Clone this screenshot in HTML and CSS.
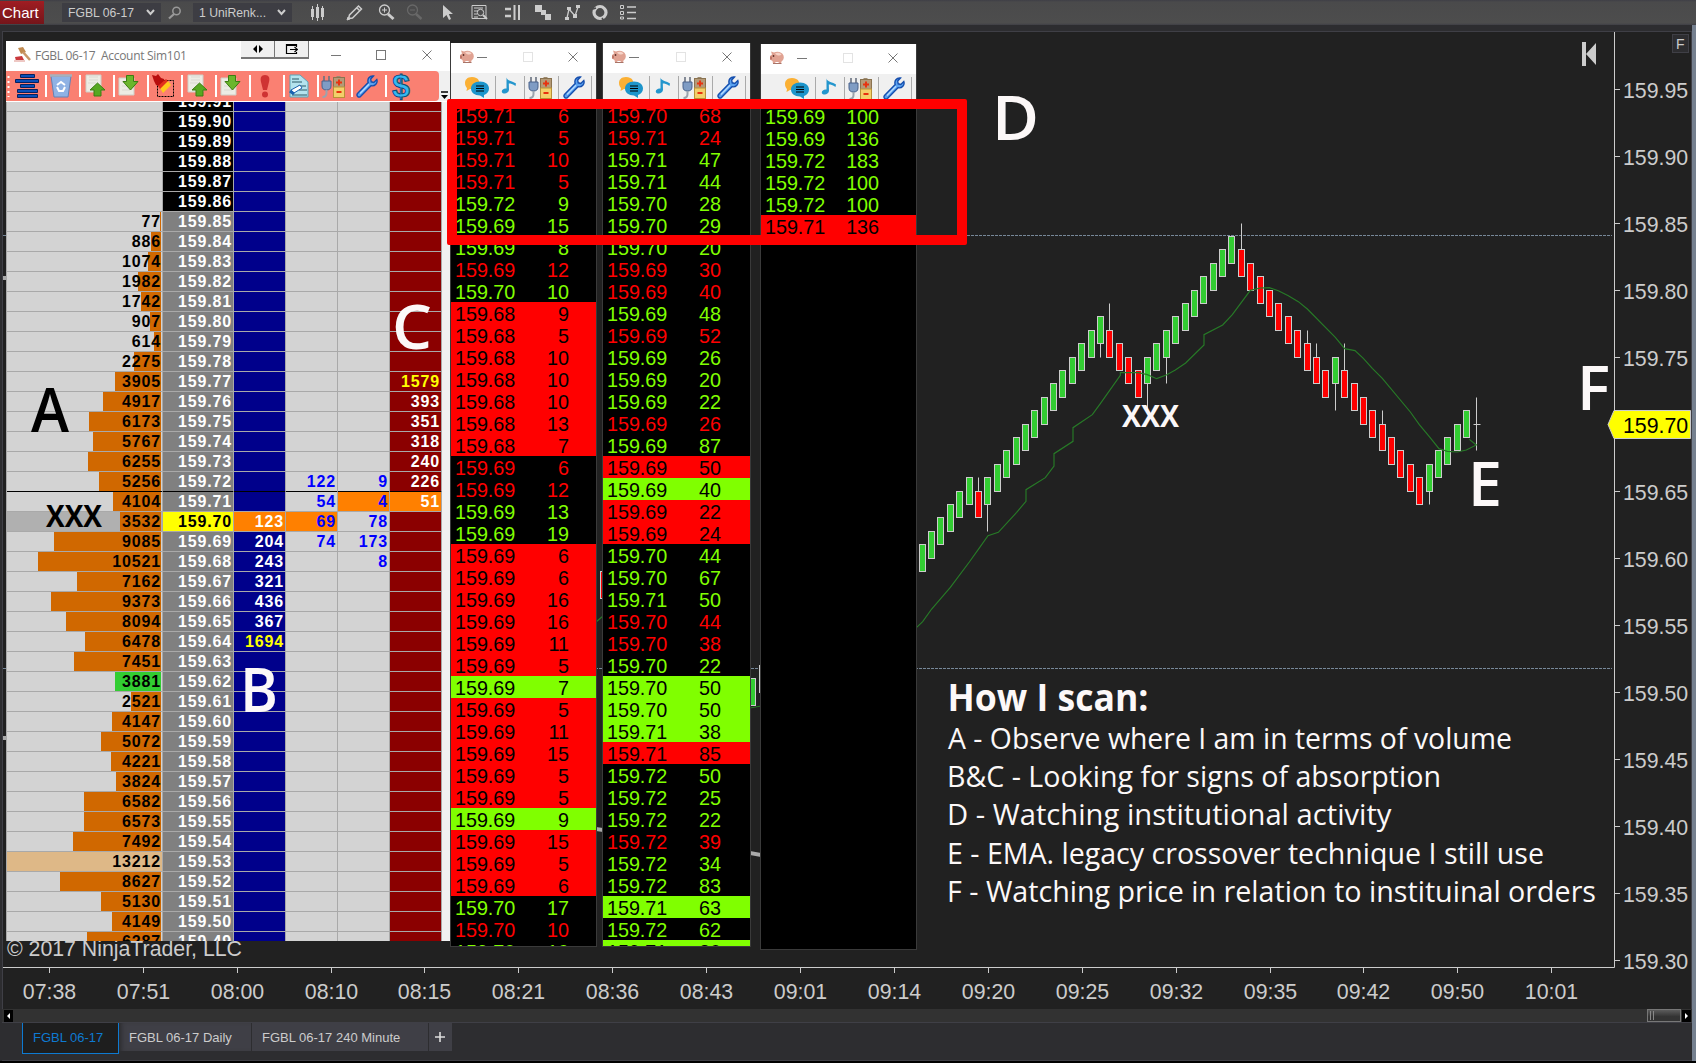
FILE: index.html
```html
<!DOCTYPE html>
<html lang="en">
<head>
  <meta charset="utf-8">
  <title>Chart - FGBL 06-17</title>
  <link rel="stylesheet" href="styles.css">
</head>
<body>
  <!-- shared icons -->
  <svg class="sprite" width="0" height="0">
    <symbol id="i-pig" viewBox="0 0 16 14">
      <path d="M3 4 L2 1 L5 2 C8 0.5 13 1 14.5 5 C15.5 8 14 10 12.5 11 L12 13 H10 L9.5 11.5 H6.500 L6 13 H4 L3.500 10.500 L1 9 V5.500 Z" fill="#e0a292"/>
      <path d="M6 3 C8 1.800 11 2 12.500 4 C11 5.500 8 5.500 6 3 Z" fill="#f6d3c8"/>
      <path d="M4 13 H12.500" stroke="#a87468" stroke-width="1"/>
      <circle cx="4.500" cy="5.500" r=".9" fill="#5c2f28"/><path d="M1 6 h2 v3 h-2 z" fill="#bf7668"/>
    </symbol>
    <symbol id="i-chat" viewBox="0 0 24 22">
      <path d="M7 1 C2 1 0 4 0 7 C0 9.500 1 11 2 12 L1.500 15 L5 13 H9 C14 12 15 8 14 5 C13 2 10 1 7 1 Z" fill="#fbb034"/>
      <path d="M15 5.500 C9.500 5.500 6 8.500 6 12.500 C6 16.500 9.500 19.500 15 19.500 L19 22 V19 C22 18 24 15.500 24 12.500 C24 8.500 20.500 5.500 15 5.500 Z" fill="#1d95cb"/>
      <path d="M11 10h8M11 12.500h8M11 15h8" stroke="#000" stroke-width="1.200"/>
    </symbol>
    <symbol id="i-note" viewBox="0 0 15 17">
      <path d="M5.500 0.500 C6 4 12 4 15 6.500 L14.500 9 C12 7 9.500 6.500 7.800 6.500 L8 13 C7.500 16 4 17.500 1.500 16 C-.5 14 2 11 5.500 11.500 Z" fill="#2496cd"/>
    </symbol>
    <symbol id="i-plug" viewBox="0 0 24 23">
      <path d="M3 1v5M8 1v5" stroke="#6a7280" stroke-width="1.600"/>
      <path d="M1 6h9v5c0 3-2 4-4.500 4S1 14 1 11z" fill="#7f9cc4" stroke="#4a628c"/>
      <path d="M5.500 15v3c0 3-2 4-4 4" fill="none" stroke="#9aa3ad" stroke-width="2"/>
      <path d="M15.500 1h4v2h-4z" fill="#9d8a70"/>
      <rect x="12.500" y="2.500" width="11" height="10" fill="#b49a78" stroke="#8a7350"/>
      <rect x="12.500" y="12" width="11" height="10.500" fill="#f3d06a" stroke="#b89237"/>
      <path d="M18 4.500v6M15 7.500h6M15.500 17h5" stroke="#e8320f" stroke-width="1.900"/>
    </symbol>
    <symbol id="i-wrench" viewBox="0 0 22 23">
      <path d="M17.500 1 C13.500 0.500 11 4 12.200 7.500 L1.500 18.500 C0 20.500 2.500 23.500 4.500 21.500 L15 10.700 C19 11.500 22 8 20.800 4.500 L17.800 7.400 L15.200 6.800 L14.700 4 Z" fill="#5aa2f0" stroke="#164fae" stroke-width="1.400"/>
      <path d="M4 18.500 L13 9.200" stroke="#b8dcff" stroke-width="1.300"/>
    </symbol>
    <symbol id="i-up" viewBox="0 0 24 24">
      <path d="M3 1h15v17H3z" fill="#ececE4" stroke="#cfcfc6"/><path d="M6 3h9M6 6h9M5 9h8" stroke="#d9d9d0"/>
      <path d="M14.500 9 L22 16 H18 V22 H11 V16 H7 Z" fill="#57a821" stroke="#3c7d12"/>
    </symbol>
    <symbol id="i-down" viewBox="0 0 24 24">
      <path d="M2 4h15v17H2z" fill="#ecece4" stroke="#cfcfc6"/><path d="M5 8h8M5 12h8M5 16h8" stroke="#d9d9d0"/>
      <path d="M9.500 1.500 H16.500 V7.500 H21 L13.500 16 L6 7.500 H9.500 Z" fill="#6bb62c" stroke="#3c7d12"/>
    </symbol>
    <symbol id="i-x" viewBox="0 0 10 10"><path d="M0.500 0.500 L9.500 9.500 M9.500 0.500 L0.500 9.500" stroke="#777" fill="none"/></symbol>
  </svg>

  <div class="menubar">
    <span class="badge">Chart</span>
    <div class="combo combo-instrument"><span>FGBL 06-17</span><svg width="9" height="7"><path d="M1 1 L4.500 5 L8 1" fill="none" stroke="#ccc" stroke-width="2"/></svg></div>
    <svg class="search" width="14" height="14"><circle cx="8.500" cy="5" r="3.700" fill="none" stroke="#999" stroke-width="1.500"/><path d="M6 8 L1 12.500" stroke="#999" stroke-width="2.200"/></svg>
    <div class="combo combo-period"><span>1 UniRenk...</span><svg width="9" height="7"><path d="M1 1 L4.500 5 L8 1" fill="none" stroke="#ccc" stroke-width="2"/></svg></div>
    <svg class="tools" width="350" height="25" viewBox="300 0 350 25" fill="none" stroke="#ccc">
      <path d="M312.500 6v14M317.500 4v17M322.500 6v14" /><path d="M312.500 9v8M317.500 7v11M322.500 8v9" stroke-width="3"/>
      <path d="M348.500 18.500 L349.500 15 L358.500 6 L361.500 9 L352.500 18 Z M357 8 L360 11" stroke-width="1.500"/><path d="M347 20l1-3 2 2z" fill="#ccc"/>
      <circle cx="384.500" cy="10" r="5" stroke-width="1.300"/><path d="M382 10h5M384.500 7.500v5"/><path d="M388 14l5.500 5" stroke-width="3"/>
      <g stroke="#686868"><circle cx="412.500" cy="10" r="5" stroke-width="1.300"/><path d="M410 10h5"/><path d="M416 14l5.500 5" stroke-width="2.500"/></g>
      <path d="M443 5 V18 L446.500 15 L449 20 L451 19 L448.800 14 L453 14 Z" fill="#ccc" stroke="none"/>
      <path d="M472 5.500h14v13h-14zM474 8h9M474 11h4M474 14h3M474 17h4"/><circle cx="480.500" cy="12.500" r="3.200"/><path d="M483 15l4 4" stroke-width="2"/>
      <path d="M505 9h6M505 16h6" stroke-width="2.500"/><path d="M514.500 5v15M519 5v15" stroke-width="2"/>
      <g fill="#ccc" stroke="none"><path d="M535 5h7v7h-7zM541 10h5v5h-5zM545 14h6v6h-6z"/></g>
      <path d="M567 18 L569 9 L575 16 L578 7" stroke-width="1.300"/><g fill="#ccc" stroke="none"><path d="M565 17h4v3h-4zM567 7h4v3h-4zM573 14h4v4h-4zM576 5h4v3h-4z"/></g>
      <circle cx="600" cy="12.500" r="6" stroke-width="3.200"/><path d="M593 9l3-1M602 18l2 3M605 7l2-2" stroke="#4b4b4c" stroke-width="1.500"/>
      <path d="M620.500 5.500h3v3h-3zM620.500 11.500h3v3h-3zM620.500 17h3v2h-3z"/><path d="M627 7h9M627 12.500h9M627 18.500h9" stroke-width="1.500"/>
    </svg>
  </div>

  <div class="main">
    <div class="workspace">
      <!-- drawing units are page pixels -->
      <svg id="chart" width="1688" height="977" viewBox="3 32 1688 977">
        <g class="session">
          <path d="M3 235.500H1612M3 668.500H1612"/>
        </g>
        <g fill="#aaa"><path d="M3 276h4v4h-4zM3 736h4v4h-4zM596 827l7 1v4l-7-1zM750 851l11 2v4l-11-2z"/></g>
        <g stroke="#ccc"><path d="M596.500 558v28M759.500 665v28"/>
          <rect x="600.500" y="571.500" width="6" height="27" fill="#f00"/><rect x="749.500" y="678.500" width="6" height="27" fill="#32cd32"/></g>
        <path class="ema" d="M596 622l7-6M750 708l11-2"/>
        <g id="candles"></g>
        <g transform="translate(900 210) scale(.33333)">
          <polyline class="ema wide" points="50,1252 68,1235 95,1197 151,1132 208,1056 235,1018 264,977 295,967 350,907 378,874 378,839 436,803 462,768 462,731 519,694 519,653 577,614 601,581 661,496 661,488 715,488 742,494 770,506 799,495 826,480 857,459 912,405 912,374 968,345 997,314 1051,241 1081,234 1108,233 1135,242 1165,257 1195,275 1222,297 1306,382 1334,416 1365,422 1390,445 1417,475 1447,505 1531,606 1558,644 1588,680 1617,716 1642,724 1672,726 1699,720 1729,705 1708,688"/>
        </g>
        <g id="axes"><path class="axis" d="M1614.500 32V967.500H3"/></g>
        <path class="price-flag" d="M1608 424.500 L1614 410.500 H1690.500 V438.500 H1614 Z"/>
        <text class="axis-label now" x="1623" y="433">159.70</text>
        <path d="M1582 42h4v24h-4zM1586 54L1596 43V65z" fill="#ccc"/>
        <rect x="1672.500" y="34.500" width="16" height="18" fill="#2d2d30" stroke="#3f3f46"/>
        <text class="fix" x="1676" y="49">F</text>
        <text class="axis-label" x="7" y="956" textLength="235">© 2017 NinjaTrader, LLC</text>
      </svg>
    </div>
    <div class="scroll">
      <span class="arrow"><svg width="9" height="12"><path d="M6 3v6L3 6z" fill="#fff"/></svg></span>
      <span class="thumb"><svg width="8" height="10"><path d="M1.500 0v9M4.500 0v9" stroke="#888"/></svg></span>
      <span class="arrow"><svg width="9" height="12"><path d="M3 3v6L6 6z" fill="#fff"/></svg></span>
    </div>
    <div class="tabs">
      <span class="tab active">FGBL 06-17</span>
      <span class="tab daily">FGBL 06-17 Daily</span>
      <span class="tab minute">FGBL 06-17 240 Minute</span>
      <span class="tab plus"><svg width="10" height="10"><path d="M5 0v10M0 5h10" stroke="#ddd" stroke-width="1.600"/></svg></span>
    </div>
  </div>

  <div class="window dom">
    <div class="dom-title">
      <svg width="17" height="16" viewBox="0 0 17 16"><path d="M4 1l5-1 3 5-5 2z" fill="#c08a50"/><path d="M9 5l7 8" stroke="#c9986a" stroke-width="2.500"/><path d="M1 10l7-1 2 4-8 1z" fill="#c9393c"/><path d="M0 13h11v2H0z" fill="#eec8c4"/></svg>
      <span class="dom-name">FGBL 06-17&nbsp; Account Sim101</span>
      <span class="tbtn"><svg width="12" height="8"><path d="M5 0v8L1 4zM7 0v8l4-4z"/></svg></span>
      <span class="tbtn"><svg width="13" height="12"><path d="M11.500 4V1.500h-10v9h10V9M1 2.500h11M5 6.500h7M9.500 4l3 2.500-3 2.500" fill="none" stroke="#000" stroke-width="1.200"/></svg></span>
      <svg class="cap-min" width="10" height="10"><path d="M0 4.500h10" stroke="#777"/></svg>
      <svg class="cap-max" width="10" height="10"><rect x=".5" y=".5" width="9" height="9" fill="none" stroke="#777"/></svg>
      <svg class="cap-x" width="10" height="10"><use href="#i-x"/></svg>
    </div>
    <div class="dom-tools">
      <div class="salmon">
        <svg class="grip" width="5" height="22"><path d="M2.500 1v21" stroke="#fff" stroke-width="2" stroke-dasharray="2 3"/></svg>
        <span class="tool"><svg width="24" height="24"><g fill="#0a4fb8" stroke="#06205f"><path d="M5.500 .5h14v3h-14zM.5 5.500h23v3h-23zM5.500 10.500h14v3h-14zM2.500 15.500h20v3h-20zM2.500 20.500h20v3h-20z"/></g></svg></span>
        <span class="tool"><svg width="24" height="24"><path d="M2 2h20l-3 21H5z" fill="#8fb2e4" stroke="#6482b5"/><path d="M1 1.500h22" stroke="#a9b1bb" stroke-width="2.500"/><path d="M8 11l4-3 4 3M16 13l-2 4h-4l-2-4" fill="none" stroke="#fff" stroke-width="2"/></svg></span>
        <span class="tool"><svg width="24" height="24"><use href="#i-up"/></svg></span>
        <span class="tool"><svg width="24" height="24"><use href="#i-down"/></svg></span>
        <span class="tool"><svg width="24" height="24"><rect x="6.500" y="6.500" width="16" height="16" fill="none" stroke="#000" stroke-dasharray="2 1"/><path d="M1 1l4 1 2-2 3 4 3 1 1 4-4 4-5-2-2-4z" fill="#b80d0d"/><path d="M9 14l8-7 3 4-8 8z" fill="#ffc91c"/><path d="M7 12l8-7 2 2-8 8z" fill="#e2301c"/></svg></span>
        <span class="tool"><svg width="24" height="24"><use href="#i-up"/></svg></span>
        <span class="tool"><svg width="24" height="24"><use href="#i-down"/></svg></span>
        <span class="tool"><svg width="24" height="24"><path d="M12 1c4 0 5 3 4 7l-2 8h-4L8 8C7 4 8 1 12 1z" fill="#cf3333"/><circle cx="12" cy="20.500" r="3" fill="#cf3333"/></svg></span>
        <span class="tool"><svg width="24" height="24"><path d="M3 1h10l8 7v15H3z" fill="#b4e3ee" stroke="#5aa5b8"/><path d="M5 5h7M5 8h10M11 12h8M12 16h8M5 21h15" stroke="#2b5966"/><path d="M4 16l9-5 2 3-8 5z" fill="#fff" stroke="#1a62b0"/><path d="M3 17l4 3" stroke="#1a62b0" stroke-width="3"/></svg></span>
        <span class="tool"><svg width="24" height="23"><use href="#i-plug"/></svg></span>
        <span class="tool"><svg width="22" height="23"><use href="#i-wrench"/></svg></span>
        <span class="tool dollar">$</span>
      </div>
      <span class="overflow"><svg width="7" height="8"><path d="M0 1h7" stroke="#000" stroke-width="1.500"/><path d="M0 4h7L3.500 8z"/></svg></span>
    </div>
    <div class="ladder" id="ladder"></div>
  </div>

  <div class="window tape tape-1"></div>
  <div class="window tape tape-2"></div>
  <div class="window tape tape-3"></div>

  <div class="frame"></div>
  <svg class="notes" width="1696" height="1063">
    <g class="mark">
      <text class="ink" x="31" y="432" textLength="38" lengthAdjust="spacingAndGlyphs">A</text>
      <text x="240" y="711.500" textLength="38" lengthAdjust="spacingAndGlyphs">B</text>
      <text x="392" y="348.500" textLength="40" lengthAdjust="spacingAndGlyphs">C</text>
      <text x="992" y="139.500" textLength="47" lengthAdjust="spacingAndGlyphs">D</text>
      <text x="1468" y="505.500" textLength="34" lengthAdjust="spacingAndGlyphs">E</text>
      <text x="1577" y="409.500" textLength="33" lengthAdjust="spacingAndGlyphs">F</text>
    </g>
    <text class="xxx ink" x="46" y="526.500" textLength="56" lengthAdjust="spacingAndGlyphs">XXX</text>
    <text class="xxx" x="1122" y="426.500" textLength="57" lengthAdjust="spacingAndGlyphs">XXX</text>
    <text class="head" x="947.500" y="710.500" textLength="201" lengthAdjust="spacingAndGlyphs">How I scan:</text>
    <g class="list">
      <text x="948" y="749" textLength="564" lengthAdjust="spacingAndGlyphs">A - Observe where I am in terms of volume</text>
      <text x="947" y="787" textLength="494" lengthAdjust="spacingAndGlyphs">B&amp;C - Looking for signs of absorption</text>
      <text x="947" y="825" textLength="444.500" lengthAdjust="spacingAndGlyphs">D - Watching institutional activity</text>
      <text x="947" y="863.500" textLength="597" lengthAdjust="spacingAndGlyphs">E - EMA. legacy crossover technique I still use</text>
      <text x="947" y="901.500" textLength="649" lengthAdjust="spacingAndGlyphs">F - Watching price in relation to instituinal orders</text>
    </g>
  </svg>

  <script src="script.js"></script>
</body>
</html>
```
FILE: styles.css
```css
* {
  box-sizing: border-box;
}

body {
  margin: 0;
  width: 1696px;
  height: 1063px;
  overflow: hidden;
  position: relative;
  background: #000;
  font-family: "Liberation Sans", Arial, sans-serif;
}

svg {
  display: block;
}

.sprite {
  position: absolute;
}

/* top bar */
.menubar {
  display: flex;
  align-items: center;
  height: 25px;
  background: linear-gradient(#3f3f46 0, #4a4a4b 2px, #4d4d4d 23px, #3f3f46 25px);
  color: #ccc;
}

.badge {
  width: 44px;
  height: 23px;
  padding-left: 2px;
  line-height: 23px;
  font-size: 15px;
  color: #fff;
  background: linear-gradient(#a01d22, #74151a);
}

.combo {
  display: flex;
  align-items: center;
  justify-content: space-between;
  width: 99px;
  height: 19px;
  padding: 0 6px;
  font-size: 12.200px;
  background: #3d3d43;
}

.combo span {
  white-space: nowrap;
}

.combo-instrument {
  margin-left: 18px;
}

.search {
  margin: 0 11px 0 7px;
}

.tools {
  margin-left: 8px;
}

/* chart area */
.main {
  display: flex;
  flex-direction: column;
  height: 1036px;
  padding-left: 2px;
  background: #2d2d30;
  border-right: 4px solid #75808f;
}

.workspace {
  margin-top: 6px;
  border: 1px solid #3f3f46;
  border-bottom: 0;
  width: 1690px;
  height: 978px;
  background: #212121;
}

.session path {
  stroke: #778899;
  stroke-dasharray: 3 1;
}

.ema {
  fill: none;
  stroke: #277a27;
  stroke-width: 1.200;
}

.ema.wide {
  stroke-width: 3.500;
}

.axis {
  fill: none;
  stroke: #ccc;
}

.axis-label {
  font-size: 21.330px;
  fill: #ccc;
}

.axis-label.mid {
  text-anchor: middle;
}

.axis-label.now {
  fill: #000;
}

.price-flag {
  fill: #ff0;
  stroke: #ccc;
}

.fix {
  font-size: 14px;
  fill: #ccc;
}

.scroll {
  display: flex;
  align-items: center;
  width: 1690px;
  height: 14px;
  padding: 0 1px 0 2px;
  background: #323232;
  border-bottom: 1px solid #3f3f46;
}

.arrow {
  width: 9px;
  height: 12px;
  background: #000;
}

.thumb {
  width: 34px;
  height: 13px;
  margin: 0 1px 0 auto;
  padding: 1px;
  border: 1px solid #777;
  background: linear-gradient(#5c5c5c, #333 60%);
}

.tabs {
  display: flex;
  align-items: flex-start;
  flex: 1;
  padding-left: 20px;
  border-bottom: 1px solid #3f3f46;
  font-size: 13px;
  line-height: 30px;
  color: #ccc;
}

.tab {
  height: 28px;
  background: #3f3f46;
  border-right: 1px solid #2d2d30;
}

.tab.active {
  width: 97px;
  height: 31px;
  padding-left: 10px;
  color: #0e7ad1;
  background: #1e1e1e;
  border: solid #0e7ad1;
  border-width: 0 1px 1px;
}

.tab.daily {
  width: 133px;
  padding-left: 10px;
  box-shadow: inset 5px 0 5px -3px #2a2a2c;
}

.tab.minute {
  width: 177px;
  padding-left: 10px;
}

.tab.plus {
  width: 24px;
  padding: 9px 6px;
}

/* floating windows */
.window {
  position: absolute;
  overflow: hidden;
}

.dom {
  left: 6px;
  top: 41px;
  width: 444px;
  height: 900px;
  background: #fff;
}

.dom-title {
  display: flex;
  height: 30px;
  padding: 6px 17px 0 8px;
}

.dom-name {
  width: 149px;
  margin-left: 4px;
  font: 12px/17px "Open Sans", sans-serif;
  letter-spacing: -0.300px;
  color: #777;
  white-space: nowrap;
}

.tbtn {
  display: flex;
  align-items: center;
  justify-content: center;
  width: 34px;
  height: 18px;
  margin-top: -6px;
  background: #f0f0f0;
  border: solid #777;
  border-width: 0 1px 2px 0;
}

.dom-name + .tbtn {
  margin-left: 57px;
}

.cap-min {
  margin: 4px 0 0 22px;
}

.cap-max,
.cap-x {
  margin: 3px 0 0 35px;
}

.dom-title .cap-x {
  margin-left: 36px;
}

.dom-tools {
  display: flex;
  height: 31px;
  background: #f0f0f0;
  border-bottom: 1px solid #fff;
}

.salmon {
  display: flex;
  align-items: center;
  width: 433px;
  background: #fa8072;
  border-radius: 0 4px 4px 0;
}

.tool {
  display: flex;
  align-items: center;
  justify-content: center;
  width: 34px;
  height: 22px;
  padding-right: 3px;
}

.tool + .tool {
  border-left: 2px solid #fff;
  padding-right: 4px;
}

.dollar {
  font: bold 32px "Liberation Sans", sans-serif;
  color: #35b8f0;
  -webkit-text-stroke: 1px #0c4b7c;
}

.overflow {
  margin: 20px 0 0 2px;
}

.ladder {
  height: 839px;
  overflow: hidden;
  padding-right: 8px;
  background: #f0f0f0;
  border-left: 1px solid #a9a9a9;
  font-weight: bold;
  font-size: 16px;
  letter-spacing: 0.850px;
}

.row {
  display: grid;
  grid-template-columns: 156px 71px 52px 52px 52px 52px;
  height: 20px;
  line-height: 19px;
  text-align: right;
  color: #fff;
}

.row:first-child {
  margin-top: -10px;
}

.cell {
  padding-right: 1px;
  background: #d3d3d3;
  border: solid #a9a9a9;
  border-width: 0 1px 1px 0;
}

.vol {
  display: grid;
  padding-right: 0;
  color: #000;
}

.vol .bar,
.vol .num {
  grid-area: 1 / 1;
}

.vol .bar {
  justify-self: end;
  margin-right: 1px;
  background: #d06800;
}

.vol .bar.own {
  background: #32cd32;
}

.vol .bar.poc {
  margin-right: 0;
  background: #deb887;
}

.vol .num {
  z-index: 1;
  padding-right: 1px;
}

.vol.current {
  background: #b0b0b0;
}

.price {
  background: #808080;
}

.price.out {
  background: #000;
}

.price.last {
  background: #ff0;
  color: #000;
}

.bid {
  background: #00008b;
}

.ask {
  background: #8b0000;
}

.trade {
  color: #00f;
}

.hot {
  background: #ff8000;
}

.big {
  color: #ff0;
}

.row.mid .cell {
  border-bottom: 2px solid #000;
}

/* time and sales windows */
.tape {
  background: #000;
  border: 1px solid #3a3a3a;
  border-top: 0;
}

.tape-1 {
  left: 450px;
  top: 43px;
  width: 147px;
  height: 904px;
}

.tape-2 {
  left: 602px;
  top: 43px;
  width: 149px;
  height: 904px;
}

.tape-3 {
  left: 760px;
  top: 44px;
  width: 157px;
  height: 906px;
}

.tape-title {
  display: flex;
  height: 30px;
  padding: 6px 18px 0 8px;
  background: #fff;
}

.tape-title .cap-min {
  margin: 4px 0 0 2px;
}

.tape-title .cap-max {
  margin: 3px auto 0;
  opacity: 0.200;
}

.tape-title .cap-x {
  margin: 3px 0 0;
}

.tape-3 .tape-title .cap-min {
  margin-left: 12px;
}

.tape-tools {
  display: flex;
  height: 31px;
  padding: 3px 0 0 14px;
  background: #f0f0f0;
}

.tape-2 .tape-tools {
  padding-left: 16px;
}

.tape-3 .tape-tools {
  padding-left: 24px;
}

.tape-tools span {
  border-right: 1px solid #aaa;
  padding-right: 6px;
  margin-right: 4px;
}

.tape-tools .t-note {
  padding: 1px 8px 0 1px;
  margin-right: 3px;
}

.tick {
  display: grid;
  grid-template-columns: 70px 48px;
  height: 22px;
  padding-left: 4px;
  line-height: 25px;
  font-size: 19.800px;
  letter-spacing: -0.050px;
}

.tick span:last-child {
  text-align: right;
  margin-right: 4px;
}

.r {
  color: #f00;
}

.g {
  color: #80ff00;
}

.R {
  background: #f00;
}

.G {
  background: #80ff00;
}

/* annotations */
.frame {
  position: absolute;
  left: 447px;
  top: 99px;
  width: 520px;
  height: 146px;
  border: 10px solid #f00;
  border-radius: 2px;
}

.notes {
  position: absolute;
  left: 0;
  top: 0;
  font-family: "Open Sans", sans-serif;
  fill: #fcf8f8;
}

.mark {
  font-size: 61px;
  font-weight: 600;
}

.ink {
  fill: #000;
}

.xxx {
  font-size: 31px;
  font-weight: 700;
}

.head {
  font-size: 38px;
  font-weight: 700;
}

.list {
  font-size: 30px;
}
```
FILE: script.js
```js
// volume per price, from 159.91 down to 159.49
const volumes = [0, 0, 0, 0, 0, 0, 77, 886, 1074, 1982, 1742, 907, 614, 2275, 3905, 4917, 6173, 5767, 6255, 5256,
  4104, 3532, 9085, 10521, 7162, 9373, 8094, 6478, 7451, 3881, 2521, 4147, 5072, 4221, 3824, 6582, 6573, 7492,
  13212, 8627, 5130, 4149, 6287];
const bids = { 70: 123, 69: 204, 68: 243, 67: 321, 66: 436, 65: 367, 64: 1694 };
const asks = { 77: 1579, 76: 393, 75: 351, 74: 318, 73: 240, 72: 226, 71: 51 };
const sold = { 72: 122, 71: 54, 70: 69, 69: 74 };
const bought = { 72: 9, 71: 4, 70: 78, 69: 173, 68: 8 };
const maxVolume = Math.max(...volumes);

function cell(cls, text) {
  return `<div class="cell ${cls}">${text || ''}</div>`;
}

document.getElementById('ladder').innerHTML = volumes.map((v, i) => {
  const p = 91 - i;
  const bar = Math.round(v / maxVolume * 155);
  const barCls = p === 62 ? 'own' : v === maxVolume ? 'poc' : '';
  return `<div class="row ${p === 72 ? 'mid' : ''}">
    <div class="cell vol ${p === 70 ? 'current' : ''}">
      <span class="bar ${barCls}" style="width:${bar}px"></span><span class="num">${v || ''}</span>
    </div>` +
    cell('price ' + (p > 85 ? 'out' : p === 70 ? 'last' : ''), '159.' + p) +
    cell('bid ' + (p === 70 ? 'hot' : p === 64 ? 'big' : ''), bids[p]) +
    cell('trade ' + (p === 70 ? 'hot' : ''), sold[p]) +
    cell('trade ' + (p === 71 ? 'hot' : ''), bought[p]) +
    cell('ask ' + (p === 71 ? 'hot' : p === 77 ? 'big' : ''), asks[p]) +
    '</div>';
}).join('');

// price, size, style: lower case = coloured text, upper case = filled row
const tapes = [
  `71 6 r,71 5 r,71 10 r,71 5 r,72 9 g,69 15 g,69 8 g,69 12 r,70 10 g,68 9 R,68 5 R,68 10 R,68 10 R,68 10 R,68 13 R,68 7 R,69 6 r,69 12 r,69 13 g,69 19 g,69 6 R,69 6 R,69 16 R,69 16 R,69 11 R,69 5 R,69 7 G,69 5 R,69 11 R,69 15 R,69 5 R,69 5 R,69 9 G,69 15 R,69 5 R,69 6 R,70 17 g,70 10 r,70 10 g`,
  `70 68 r,71 24 r,71 47 g,71 44 g,70 28 g,70 29 g,70 20 g,69 30 r,69 40 r,69 48 g,69 52 r,69 26 g,69 20 g,69 22 g,69 26 r,69 87 g,69 50 R,69 40 G,69 22 R,69 24 R,70 44 g,70 67 g,71 50 g,70 44 r,70 38 r,70 22 g,70 50 G,70 50 G,71 38 G,71 85 R,72 50 g,72 25 g,72 22 g,72 39 r,72 34 g,72 83 g,71 63 G,72 62 g,71 20 G`,
  `69 100 g,69 136 g,72 183 g,72 100 g,72 100 g,71 136 R`
];

document.querySelectorAll('.tape').forEach((el, i) => {
  el.innerHTML = `<div class="tape-title">
      <svg width="16" height="15"><use href="#i-pig"/></svg>
      <svg class="cap-min" width="10" height="10"><path d="M0 4.5h10" stroke="#777"/></svg>
      <svg class="cap-max" width="10" height="10"><rect x=".5" y=".5" width="9" height="9" fill="none" stroke="#777"/></svg>
      <svg class="cap-x" width="10" height="10"><use href="#i-x"/></svg>
    </div>
    <div class="tape-tools">
      <span><svg width="24" height="22"><use href="#i-chat"/></svg></span>
      <span class="t-note"><svg width="15" height="17"><use href="#i-note"/></svg></span>
      <span><svg width="24" height="23"><use href="#i-plug"/></svg></span>
      <span><svg width="22" height="23"><use href="#i-wrench"/></svg></span>
    </div>` +
    tapes[i].split(',').map(t => {
      const [price, size, cls] = t.split(' ');
      return `<div class="tick ${cls}"><span>159.${price}</span><span>${size}</span></div>`;
    }).join('');
});

// candles: top tick, direction, optional wick end tick
const bars = `61g 62g 63g 64g 65g 66g 65r66 66g62 67g 68g 69g 70g 71g 72g 73g 74g 75g 76g 77g 78g75 77r79 76r 75r 74r 75g71 76g 77g73 78g 79g 80g 81g 82g 83g 84g 83r85 82r 81r 80r 79r 78r 77r 76r77 75r76 74r 75g71 74r76 73r 72r 71r 70r71 69r 68r 67r 66r 67g64 68g 69g 70g 71g`.split(' ');
const tickY = t => Math.floor(223.1 + (85 - t) * 13.4) + 0.5;
const barX = i => Math.floor(922.1 + i * 9.39) + 0.5;

document.getElementById('candles').innerHTML = bars.map((b, i) => {
  const [, top, dir, wick] = b.match(/(\d+)([gr])(\d*)/);
  const x = barX(i), y = tickY(top), bottom = tickY(top - 2);
  const from = +wick > +top ? y : bottom;
  return (wick ? `<path d="M${x} ${from}V${tickY(wick)}" stroke="#ccc"/>` : '') +
    `<rect x="${x - 3}" y="${y}" width="6" height="${bottom - y}" fill="${dir === 'g' ? '#32cd32' : '#f00'}" stroke="#ccc"/>`;
}).join('') + `<path d="M${barX(59)} ${tickY(72)}V${tickY(68)}M${barX(59) - 3} ${tickY(70)}h7" stroke="#ccc"/>`;

const times = ['07:38', '07:51', '08:00', '08:10', '08:15', '08:21', '08:36', '08:43', '09:01', '09:14', '09:20',
  '09:25', '09:32', '09:35', '09:42', '09:50', '10:01'];
let axes = '';
times.forEach((t, i) => {
  const x = Math.floor(49.3 + i * 93.9) + 0.5;
  axes += `<path class="axis" d="M${x} 968v5"/><text class="axis-label mid" x="${x}" y="998.5">${t}</text>`;
});
for (let i = 0; i < 14; i++) {
  const y = 89.5 + i * 67;
  axes += `<path class="axis" d="M1615 ${y}h5"/>`;
  if (i !== 5) axes += `<text class="axis-label" x="1623" y="${y + 8}">159.${95 - i * 5}</text>`;
}
document.getElementById('axes').innerHTML += axes;
```
